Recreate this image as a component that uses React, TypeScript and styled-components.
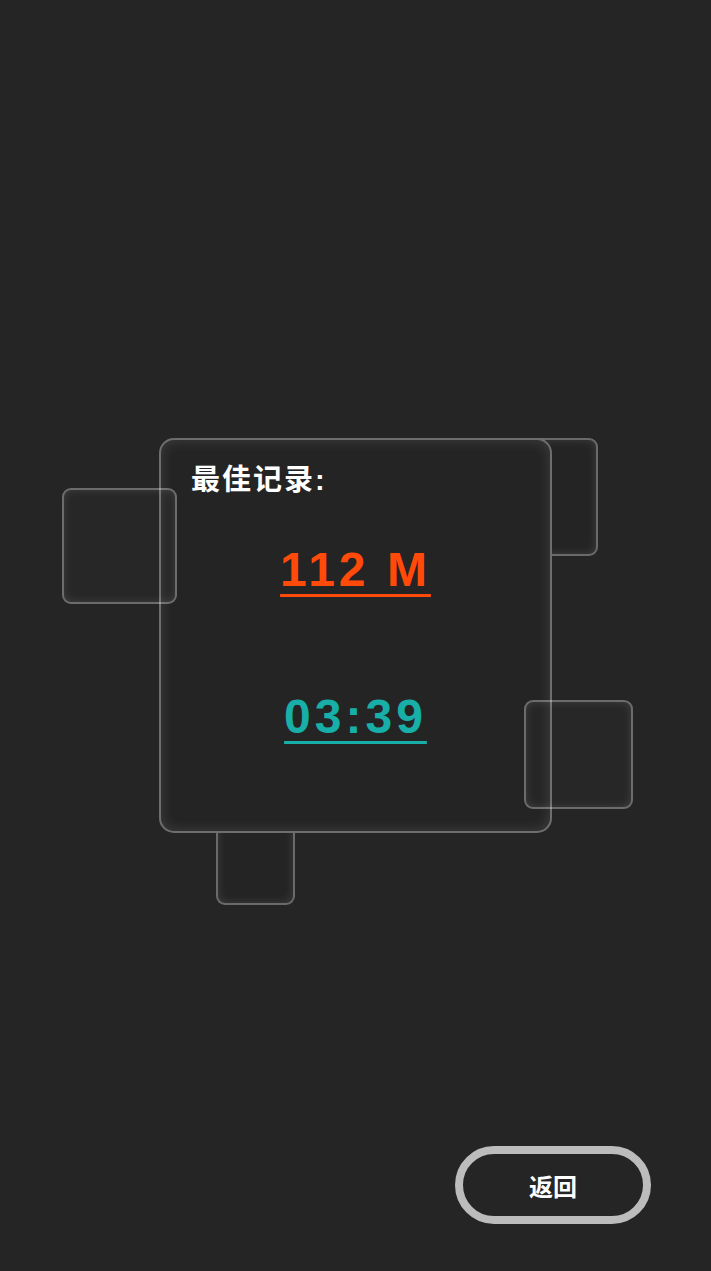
import React from 'react'
import styled, { createGlobalStyle } from 'styled-components'

const GlobalStyle = createGlobalStyle`
  html, body {
    margin: 0;
    padding: 0;
    background: #252525;
  }
  body {
    font-family: 'Liberation Sans', 'Noto Sans CJK SC', sans-serif;
  }
`

interface Tile {
  left: number
  top: number
  width: number
  height: number
  front?: boolean
}

// decorative glass tiles around the record card; "front" ones sit over it
const tiles: Tile[] = [
  { left: 360, top: 0, width: 79, height: 118 },
  { left: 57, top: 320, width: 79, height: 147 },
  { left: -97, top: 50, width: 115, height: 116, front: true },
  { left: 365, top: 262, width: 109, height: 109, front: true },
]

const App = () => {
  return (
    <SPage>
      <GlobalStyle />
      <SSpacer />
      <SStage>
        {tiles.map((t, i) => (
          <STile
            key={i}
            $front={t.front}
            style={{ left: t.left, top: t.top, width: t.width, height: t.height }}
          />
        ))}
        <SCard>
          <STitle>最佳记录:</STitle>
          <SValues>
            <SValue $color="#ff4a0a">112 M</SValue>
            <SValue $color="#17afa7">03:39</SValue>
          </SValues>
        </SCard>
      </SStage>
      <SFooter>
        <SBackButton>返回</SBackButton>
      </SFooter>
    </SPage>
  )
}

const SPage = styled.div`
  min-height: 100vh;
  display: grid;
  grid-template-rows: 1fr auto 1fr;
  justify-items: center;
  overflow: hidden;
`

const SSpacer = styled.div``

const SStage = styled.div`
  position: relative;
  width: 393px;
  height: 395px;
`

const STile = styled.div<{ $front?: boolean }>`
  position: absolute;
  box-sizing: border-box;
  border-radius: 9px;
  border: 2px solid rgba(255, 255, 255, 0.32);
  box-shadow: inset 0 0 10px rgba(255, 255, 255, 0.13);
  background: ${({ $front }) => ($front ? 'rgba(255, 255, 255, 0.01)' : '#242424')};
  z-index: ${({ $front }) => ($front ? 2 : 0)};
`

const SCard = styled.div`
  position: relative;
  z-index: 1;
  box-sizing: border-box;
  width: 100%;
  height: 100%;
  padding: 23px 30px;
  border-radius: 15px;
  border: 2px solid rgba(255, 255, 255, 0.34);
  background: #242424;
  box-shadow: inset 0 0 14px rgba(255, 255, 255, 0.13);
  display: flex;
  flex-direction: column;
`

const STitle = styled.div`
  color: #ffffff;
  font-size: 29px;
  font-weight: bold;
  letter-spacing: 2px;
  line-height: 34px;
`

const SValues = styled.div`
  display: flex;
  flex-direction: column;
  align-items: center;
  gap: 89px;
  margin-top: 44px;
`

const SValue = styled.div<{ $color: string }>`
  color: ${({ $color }) => $color};
  font-size: 48px;
  font-weight: bold;
  letter-spacing: 4px;
  line-height: 58px;
  text-decoration: underline;
  text-decoration-thickness: 3px;
  text-underline-offset: 8px;
  white-space: pre;
`

const SFooter = styled.div`
  justify-self: stretch;
  display: flex;
  justify-content: flex-end;
  align-items: flex-end;
  padding: 0 60px 47px 0;
`

const SBackButton = styled.button`
  box-sizing: border-box;
  width: 196px;
  height: 78px;
  border-radius: 39px;
  border: 8px solid #bcbcbc;
  background: #252525;
  color: #ffffff;
  font-family: 'Noto Sans CJK SC', sans-serif;
  font-size: 24px;
  font-weight: bold;
  cursor: pointer;
`

export default App
